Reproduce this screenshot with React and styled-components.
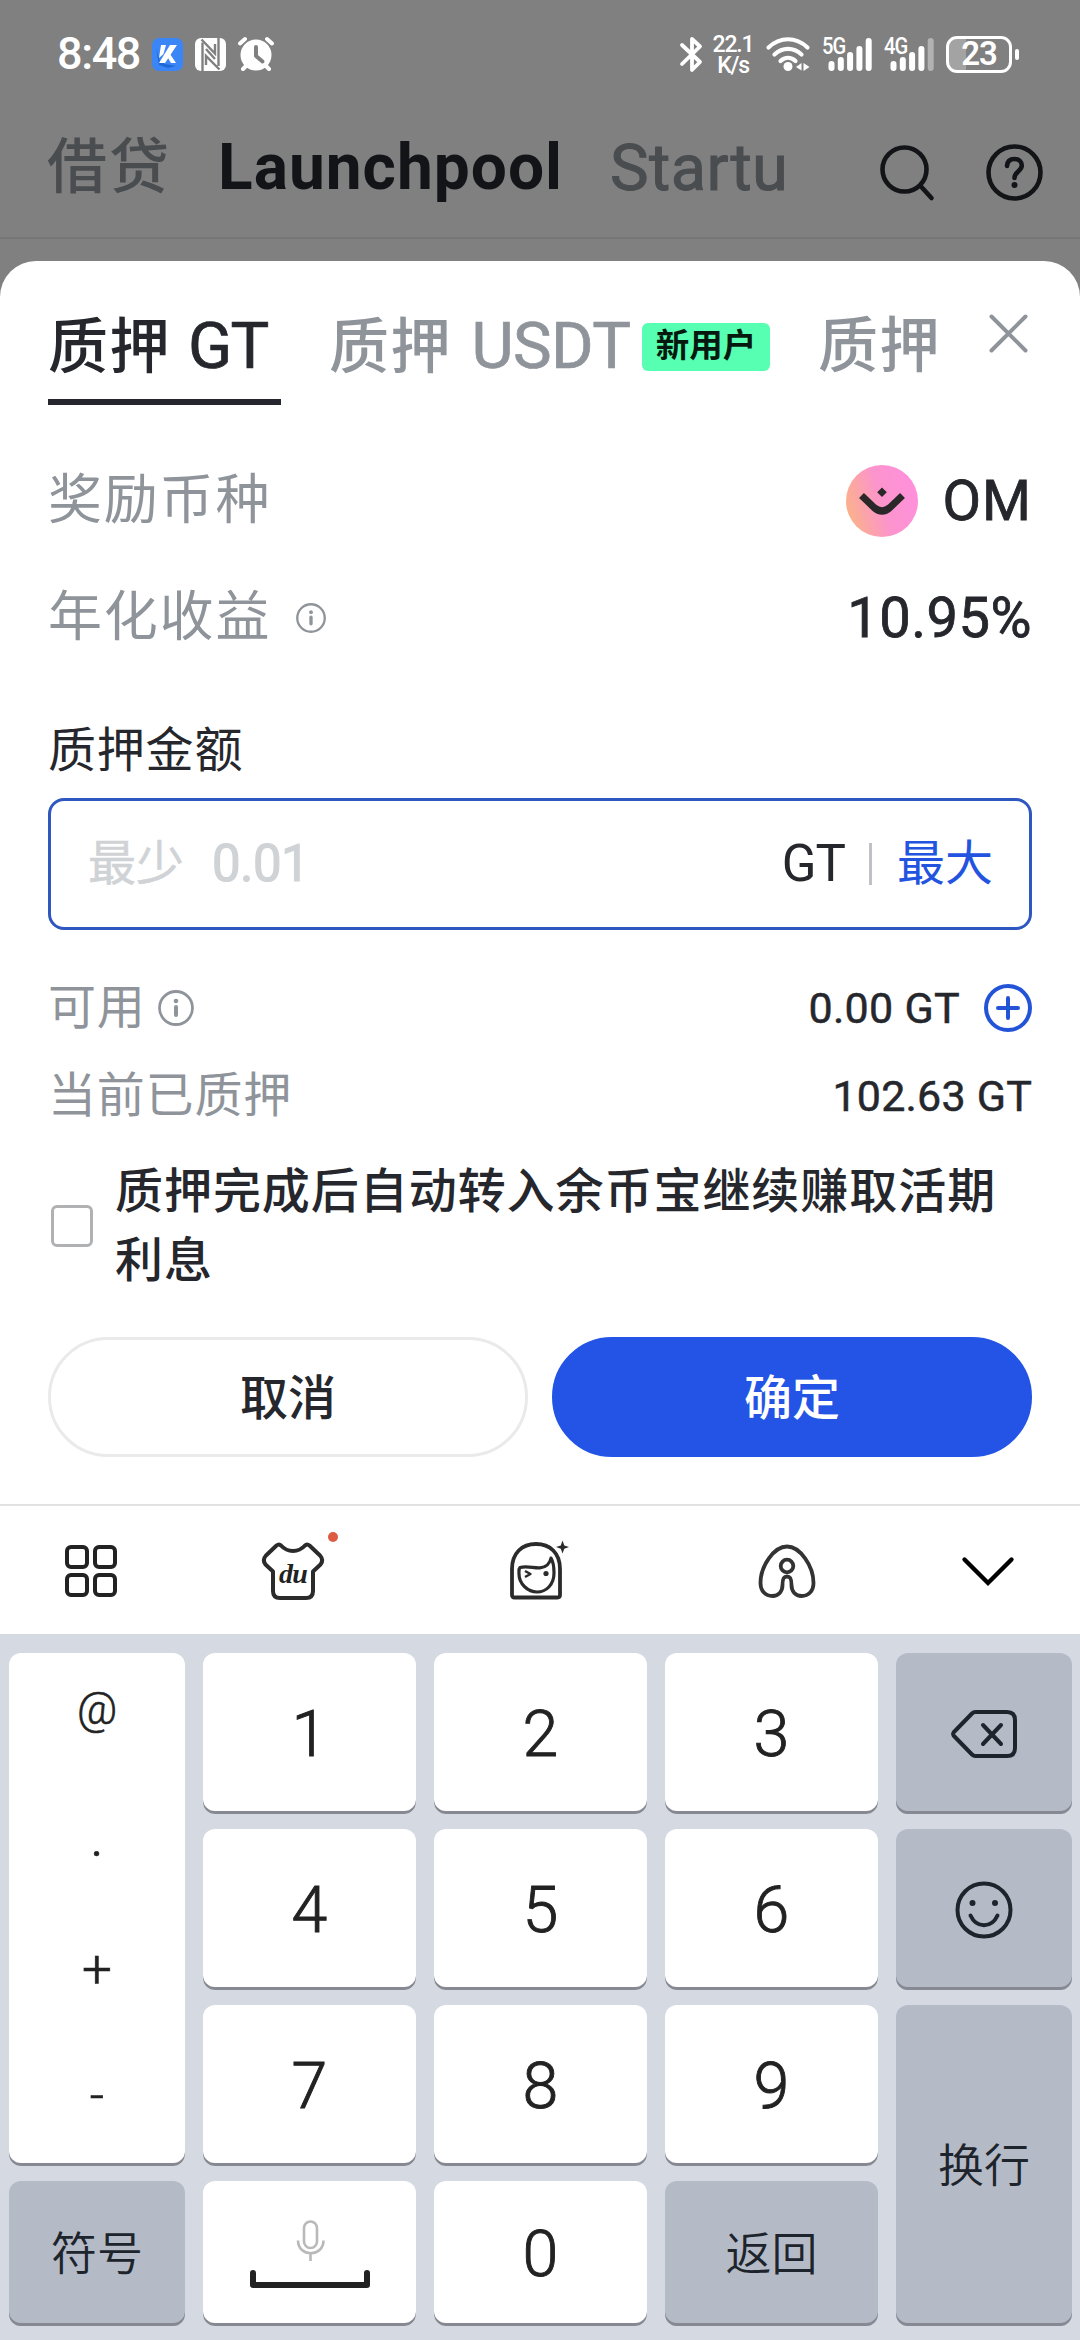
import React from 'react';
import styled, { createGlobalStyle } from 'styled-components';

const GlobalStyle = createGlobalStyle`
  * { box-sizing: border-box; }
  html, body { margin: 0; padding: 0; background: #808080; }
  body {
    font-family: Roboto, "Noto Sans CJK SC", sans-serif;
    color: #25272d;
    width: 1080px;
    overflow-x: hidden;
  }
  svg { display: block; flex: none; overflow: visible; }
  button { font: inherit; color: inherit; border: 0; padding: 0; margin: 0; background: none; }
`;

const Screen = styled.div`
  width: 1080px;
  height: 2340px;
  display: flex;
  flex-direction: column;
  overflow: hidden;
  background: #808080;
`;

/* ---------- status bar ---------- */
const StatusBar = styled.div`
  height: 108px;
  flex: none;
  display: flex;
  justify-content: space-between;
  align-items: center;
  padding: 0 61px 0 57px;
  color: #fff;
`;
const StatusGroup = styled.div`
  display: flex;
  align-items: center;
`;
const Clock = styled.span`
  font-size: 45px;
  line-height: 54px;
  font-weight: 500;
  letter-spacing: -1.4px;
  width: 95px;
`;
const LeftIcons = styled.div`
  display: flex;
  gap: 12px;
  align-items: center;
`;
const NetSpeed = styled.div`
  display: flex;
  flex-direction: column;
  align-items: center;
  font-size: 23px;
  line-height: 21px;
  font-weight: 500;
  letter-spacing: -1.2px;
  width: 42px;
  margin: 1px 12px 0 10px;
`;
const Signal = styled.div`
  display: flex;
  position: relative;
  margin-left: ${(p) => p.$left}px;
`;
const SignalLabel = styled.span`
  position: absolute;
  left: 0;
  top: -1px;
  font-size: 24px;
  line-height: 20px;
  font-weight: 500;
  letter-spacing: -1px;
  transform: scaleX(0.84);
  transform-origin: left;
`;
const Battery = styled.div`
  display: flex;
  align-items: center;
  gap: 3px;
  margin-left: 12px;
`;
const BatteryCell = styled.div`
  width: 66px;
  height: 37px;
  border: 3px solid #fff;
  border-radius: 11px;
  display: flex;
  align-items: center;
  justify-content: center;
  background: #808080 linear-gradient(90deg, #a3a3a3 0%, #a3a3a3 28%, #808080 29%, #808080 100%) no-repeat;
  font-size: 33px;
  line-height: 32px;
  font-weight: 600;
  letter-spacing: -1px;
`;
const BatteryTip = styled.div`
  width: 4px;
  height: 11px;
  border-radius: 2px;
  background: #fff;
`;

/* ---------- dimmed page header ---------- */
const PageHeader = styled.div`
  height: 131px;
  flex: none;
  display: flex;
  align-items: flex-start;
  border-bottom: 2px solid #767676;
  padding: 23px 37px 0 47px;
  line-height: 74px;
`;
const HeaderTab = styled.span`
  font-size: ${(p) => p.$size}px;
  font-weight: ${(p) => p.$weight};
  color: ${(p) => (p.$active ? '#121417' : '#4a4d50')};
  width: ${(p) => p.$w}px;
  white-space: nowrap;
  letter-spacing: ${(p) => p.$ls || 0}px;
  -webkit-text-stroke: ${(p) => p.$stroke || 0}px currentColor;
`;
const HeaderIcons = styled.div`
  margin-left: auto;
  display: flex;
  align-items: center;
  gap: 52px;
  padding-top: 13px;
`;

/* ---------- sheet ---------- */
const Sheet = styled.div`
  margin-top: 22px;
  height: 1243px;
  flex: none;
  background: #fff;
  border-radius: 36px 36px 0 0;
  padding: 0 48px;
  display: flex;
  flex-direction: column;
`;
const TabRow = styled.div`
  height: 144px;
  flex: none;
  display: flex;
  gap: 48px;
`;
const Tab = styled.div`
  display: flex;
  align-items: center;
  width: ${(p) => p.$w}px;
  flex: none;
  height: 144px;
  padding-top: 34px;
  border-bottom: 6px solid ${(p) => (p.$active ? '#25262e' : 'transparent')};
  font-size: 60px;
  line-height: 80px;
  font-weight: 500;
  letter-spacing: 1.5px;
  color: ${(p) => (p.$active ? '#25272d' : '#8f949b')};
  white-space: nowrap;
`;
const Ticker = styled.span`
  font-size: 65px;
  margin-left: ${(p) => p.$left}px;
  letter-spacing: ${(p) => p.$ls}px;
  font-weight: 400;
  -webkit-text-stroke: 0.7px currentColor;
`;
const Badge = styled.span`
  margin-left: auto;
  width: 128px;
  height: 48px;
  border-radius: 6px;
  background: #56ffb2;
  color: #06190f;
  font-size: 33.5px;
  line-height: 45px;
  font-weight: 700;
  letter-spacing: 0;
  text-align: center;
`;
const CloseButton = styled.button`
  margin-left: auto;
  align-self: flex-start;
  padding: 53px 4px 0 0;
`;

const InfoRow = styled.div`
  display: flex;
  justify-content: space-between;
  align-items: center;
  height: ${(p) => p.$h}px;
  margin-top: ${(p) => p.$mt || 0}px;
  flex: none;
`;
const Label = styled.span`
  display: flex;
  align-items: center;
  gap: ${(p) => p.$gap || 0}px;
  font-size: ${(p) => (p.$large ? 54 : 48)}px;
  line-height: 70px;
  letter-spacing: ${(p) => (p.$large ? 1.8 : 0.8)}px;
  font-weight: 400;
  color: #8f949b;
`;
const Value = styled.span`
  display: flex;
  align-items: center;
  gap: ${(p) => p.$gap || 0}px;
  font-size: ${(p) => (p.$large ? 56 : 43)}px;
  line-height: 70px;
  font-weight: 400;
  -webkit-text-stroke: ${(p) => (p.$large ? 0.8 : 0.5)}px currentColor;
  letter-spacing: ${(p) => p.$ls || 0}px;
  color: #25272d;
`;
const FieldTitle = styled.div`
  margin-top: 44px;
  height: 60px;
  flex: none;
  font-size: 48px;
  line-height: 60px;
  letter-spacing: 0.8px;
`;
const AmountField = styled.div`
  margin-top: 17px;
  height: 132px;
  flex: none;
  border: 3px solid #2f57c0;
  border-radius: 16px;
  display: flex;
  align-items: center;
  padding: 0 36px 0 37px;
  font-size: 48px;
  line-height: 70px;
`;
const Placeholder = styled.span`
  color: #d0d3d6;
  display: flex;
  gap: 28px;
  flex: 1;
  -webkit-text-stroke: 0.5px currentColor;
`;
const PlaceholderAmount = styled.span`
  font-size: 51px;
  letter-spacing: -0.6px;
  -webkit-text-stroke: 1.2px currentColor;
`;
const Unit = styled.span`
  font-size: 51px;
  letter-spacing: -1px;
`;
const FieldDivider = styled.span`
  width: 3px;
  height: 42px;
  background: #bfc1c6;
  margin: 0 25px 0 24px;
`;
const MaxButton = styled.button`
  color: #2354e0;
`;
const ConsentRow = styled.label`
  margin-top: 23px;
  height: 138px;
  flex: none;
  display: flex;
  align-items: center;
`;
const Checkbox = styled.span`
  width: 42px;
  height: 42px;
  border: 3px solid #b0b1b3;
  border-radius: 6px;
  margin: 4px 22px 0 3px;
  flex: none;
`;
const ConsentText = styled.span`
  font-size: 48px;
  line-height: 69px;
  font-weight: 500;
  letter-spacing: 0.95px;
  width: 900px;
  padding-top: 3px;
`;
const Actions = styled.div`
  margin-top: 44px;
  display: grid;
  grid-template-columns: 1fr 1fr;
  gap: 24px;
  height: 120px;
  flex: none;
`;
const ActionButton = styled.button`
  border-radius: 60px;
  border: 3px solid ${(p) => (p.$primary ? '#2354e6' : '#eaeaea')};
  background: ${(p) => (p.$primary ? '#2354e6' : '#fff')};
  color: ${(p) => (p.$primary ? '#fff' : '#25272d')};
  font-size: 48px;
  line-height: 70px;
  font-weight: 500;
  padding-top: 3px;
`;

/* ---------- keyboard ---------- */
const KeyboardBar = styled.div`
  height: 130px;
  flex: none;
  background: #fff;
  border-top: 2px solid #e2e2e2;
  display: grid;
  grid-template-columns: 197px 248px 248px 204px auto;
  align-items: start;
  padding: 36px 66px 0 65px;
`;
const ShirtIcon = styled.div`
  position: relative;
`;
const RedDot = styled.span`
  position: absolute;
  left: 66px;
  top: -10px;
  width: 10px;
  height: 10px;
  border-radius: 50%;
  background: #dd5a43;
`;
const Keyboard = styled.div`
  flex: 1;
  background: #d5d9e1;
  padding: 19px 8px 14px 9px;
  display: grid;
  grid-template-columns: 176px 213px 213px 213px 176px;
  grid-template-rows: 161px 161px 161px 145px;
  gap: 15px 18px;
`;
const Key = styled.button`
  display: flex;
  flex-direction: column;
  align-items: center;
  justify-content: center;
  grid-row: ${(p) => p.$row};
  grid-column: ${(p) => p.$col};
  background: ${(p) => (p.$dark ? '#b4bbc7' : '#fff')};
  border-radius: 12px;
  box-shadow: inset 0 -3px 0 #868991;
  color: ${(p) => (p.$dark ? '#1e242c' : '#222')};
  font-size: ${(p) => (p.$dark ? 46 : 64.5)}px;
  line-height: 70px;
  font-weight: ${(p) => (p.$dark ? 350 : 300)};
  -webkit-text-stroke: ${(p) => (p.$dark ? 0 : 0.9)}px currentColor;
`;
const SymbolKey = styled(Key)`
  justify-content: flex-start;
  line-height: 80px;
  padding-top: 16px;
  -webkit-text-stroke: 0.6px currentColor;
`;
const SymbolItem = styled.span`
  height: ${(p) => p.$h}px;
  font-size: ${(p) => p.$size || 44}px;
  font-weight: ${(p) => p.$weight || 300};
`;

const KIcon = () => (
  <svg width="31" height="33" viewBox="0 0 31 33">
    <rect width="31" height="33" rx="7" fill="#3b86f7" />
    <path d="M4 10 L8 23 L13 26 L24 28 L16 30 L7 27 Z" fill="#1f68d8" />
    <path d="M9 7h5l-2.500 9-4.500 4z" fill="#fff" />
    <path d="M18 7h7L13 25H7z" fill="#fff" />
    <path d="M18 16l6 9h-5l-3-5z" fill="#fff" />
  </svg>
);
const NfcIcon = () => (
  <svg width="31" height="33" viewBox="0 0 31 33">
    <rect x="0" y="0" width="31" height="33" rx="6" fill="#fff" />
    <g stroke="#808080" fill="none" strokeWidth="2.400">
      <path d="M7.500 33V4.500" />
      <path d="M6.500 1.500 L20 15.500 V6" />
      <path d="M23.500 0V28" />
      <path d="M24.500 31.500 L11 18 V27" />
      <path d="M11 11 L20 21" />
    </g>
  </svg>
);
const AlarmIcon = () => (
  <svg width="36" height="34" viewBox="0 0 36 34">
    <circle cx="18" cy="18" r="15.500" fill="#fff" />
    <g stroke="#fff" strokeWidth="4" strokeLinecap="round">
      <path d="M2 6.500L7 2M34 6.500L29 2M9 28l-4 4M27 28l4 4" />
    </g>
    <path d="M18 10v9l6.500 5.500" stroke="#808080" strokeWidth="4" fill="none" strokeLinecap="round" strokeLinejoin="round" />
  </svg>
);
const BluetoothIcon = () => (
  <svg width="22" height="35" viewBox="0 0 22 35" fill="none" stroke="#fff" strokeWidth="3.800" strokeLinecap="round" strokeLinejoin="round">
    <path d="M2 8L20 25 12 33V2l8 7.500L2 27" />
  </svg>
);
const WifiIcon = () => (
  <svg width="44" height="34" viewBox="0 0 44 34" fill="none" stroke="#fff" strokeWidth="4.200" strokeLinecap="round">
    <path d="M2.500 10.500C14 -0.500 30 -0.500 41.500 10.500" />
    <path d="M8.500 17.500C16.500 10 27.500 10 35.500 17.500" />
    <path d="M14.500 24C19 19.800 25 19.800 29.500 24" />
    <circle cx="22" cy="29.500" r="4.500" fill="#fff" stroke="none" />
    <path d="M35.500 26v7.500L30 30zM37.500 26v8l6-4z" fill="#fff" stroke="none" />
  </svg>
);
const bars = [10, 14, 19, 25, 33];
const SignalBars = ({ faded }) => (
  <svg width="50" height="34" viewBox="0 0 50 34">
    {bars.map((h, i) => (
      <rect key={h} x={6.5 + i * 9.3} y={34 - h} width="6" height={h} rx="3" fill={faded && i === 4 ? '#b2b2b2' : '#fff'} />
    ))}
  </svg>
);
const SearchIcon = () => (
  <svg width="54" height="56" viewBox="0 0 54 56" fill="none" stroke="#121417" strokeWidth="4.600" strokeLinecap="round">
    <circle cx="24.500" cy="24.500" r="22" />
    <path d="M41 41.500l10.500 11.500" />
  </svg>
);
const HelpIcon = () => (
  <svg width="57" height="57" viewBox="0 0 57 57" fill="none" stroke="#121417" strokeWidth="4.600" strokeLinecap="round">
    <circle cx="28.500" cy="28.500" r="26" />
    <path d="M21 22c.3-5 3.500-7 7.500-7 4.500 0 7.300 2.800 7.300 6.500 0 5.500-7.300 6-7.300 12.500" />
    <circle cx="28.500" cy="41" r="3" fill="#121417" stroke="none" />
  </svg>
);
const CloseIcon = () => (
  <svg width="39" height="39" viewBox="0 0 39 39" fill="none" stroke="#8f949b" strokeWidth="4" strokeLinecap="round">
    <path d="M2.500 2.500l34 34M36.500 2.500l-34 34" />
  </svg>
);
const InfoIcon = ({ size }) => (
  <svg width={size} height={size} viewBox="0 0 36 36" fill="none" stroke="#8f949b" strokeWidth="2.800">
    <circle cx="18" cy="18" r="16.500" />
    <path d="M18 17v8" strokeWidth="4" strokeLinecap="round" />
    <circle cx="18" cy="11" r="2.300" fill="#8f949b" stroke="none" />
  </svg>
);
const OmCoin = () => (
  <svg width="72" height="72" viewBox="0 0 72 72">
    <defs>
      <linearGradient id="om" x1="0" y1="0.650" x2="1" y2="0.350">
        <stop offset="0" stopColor="#fbb288" />
        <stop offset="0.500" stopColor="#fc94cd" />
        <stop offset="1" stopColor="#ff90dc" />
      </linearGradient>
    </defs>
    <circle cx="36" cy="36" r="36" fill="url(#om)" />
    <path d="M15.500 30.500L28 42.500q8 7 16 0L56.500 30.500" fill="none" stroke="#2a2728" strokeWidth="7" />
    <path d="M36 22.500l4.800 4.700-4.800 4.700-4.800-4.700z" fill="#2a2728" />
  </svg>
);
const PlusIcon = () => (
  <svg width="48" height="48" viewBox="0 0 48 48" fill="none" stroke="#2354d8" strokeWidth="4" strokeLinecap="round">
    <circle cx="24" cy="24" r="22" />
    <path d="M24 14v20M14 24h20" />
  </svg>
);
const GridIcon = () => (
  <svg width="52" height="52" viewBox="0 0 52 52" fill="none" stroke="#222" strokeWidth="4">
    <rect x="2" y="5" width="20" height="20" rx="4" />
    <rect x="30" y="5" width="20" height="20" rx="4" />
    <rect x="2" y="33" width="20" height="20" rx="4" />
    <rect x="30" y="33" width="20" height="20" rx="4" />
  </svg>
);
const TShirt = () => (
  <svg width="62" height="58" viewBox="0 0 62 58" fill="none" stroke="#2b2b2b" strokeWidth="4" strokeLinejoin="round">
    <path d="M19 3.500q-2-2-4.500 0L4 13.500q-4 4.500-.5 9l7.500 7V49q0 7 7 7h26q7 0 7-7V29.500l7.500-7q3.500-4.500-.5-9L47.500 3.500q-2.500-2-4.500 0-5 5.500-12 5.500T19 3.500z" />
    <text x="31" y="41" textAnchor="middle" fontFamily="Liberation Serif, serif" fontStyle="italic" fontWeight="700" fontSize="28" letterSpacing="-0.800" fill="#222" stroke="none">du</text>
  </svg>
);
const GirlIcon = () => (
  <svg width="59" height="58" viewBox="0 0 59 58" fill="none" stroke="#2b2b2b" strokeWidth="3.800" strokeLinejoin="round">
    <path d="M2 53V27C2 11 12 2 26 2s24 9 24 25v26q0 2.500-2.500 2.500h-43Q2 55.500 2 53z" />
    <path d="M10 25.500c7-2 14 .8 20 .3 6-.5 10-4.500 11-9.800 3 5 3 10 3 15 0 12-8 19-17 19S9 42 9 32c0-3-.5-5 1-6.500z" strokeWidth="3.200" />
    <path d="M15 29l5.500 3-5.500 3" strokeWidth="2.400" />
    <circle cx="36" cy="31.500" r="2.600" fill="#2b2b2b" stroke="none" />
    <path d="M52.500 -1.500l1.800 4.900L59 5l-4.700 1.800L52.500 11.500l-1.700-4.700L46 5l4.800-1.600z" fill="#2b2b2b" stroke="none" />
  </svg>
);
const AvatarIcon = () => (
  <svg width="58" height="56" viewBox="0 0 58 56" fill="none" stroke="#333" strokeWidth="3.800" strokeLinejoin="round">
    <path d="M29 4.500C42 4.500 55.500 24 55.500 41c0 8-5 13-12 13-6 0-10-4.500-10-11 0-5-.5-8.500-4.500-8.500s-4.500 3.500-4.500 8.500c0 6.500-4 11-10 11-7 0-12-5-12-13C2.500 24 16 4.500 29 4.500z" />
    <circle cx="29" cy="24" r="6.300" />
  </svg>
);
const ChevronIcon = () => (
  <svg width="52" height="46" viewBox="0 0 52 46" fill="none" stroke="#000" strokeWidth="4.400" strokeLinecap="round">
    <path d="M2.500 17.500L26 41 49.500 17.500" />
  </svg>
);
const BackspaceIcon = () => (
  <svg width="66" height="48" viewBox="0 0 66 48" fill="none" stroke="#1e242c" strokeWidth="4" strokeLinecap="round" strokeLinejoin="round">
    <path d="M24.500 2H56q8 0 8 8v28q0 8-8 8H24.500q-2 0-3.500-1.500L2.500 25.500q-1-1.500 0-3L21 3.500Q22.500 2 24.500 2z" />
    <path d="M32 15l18 19M50 15L32 34" />
  </svg>
);
const SmileIcon = () => (
  <svg width="58" height="58" viewBox="0 0 58 58" fill="none" stroke="#1e242c" strokeWidth="4" strokeLinecap="round">
    <circle cx="29" cy="29" r="26.500" />
    <path d="M15.500 34.500c6 13 21 13 27 0" />
    <circle cx="17.500" cy="22" r="3" fill="#1e242c" stroke="none" />
    <circle cx="40" cy="22" r="3" fill="#1e242c" stroke="none" />
  </svg>
);
const SpaceIcon = () => (
  <svg width="120" height="68" viewBox="0 0 120 68" fill="none">
    <g stroke="#b9b9b9" strokeWidth="2.600">
      <rect x="54" y="1.500" width="13" height="26.500" rx="6.500" />
      <path d="M48 20.500c0 17 25.500 17 25.500 0M60.500 33v8" />
    </g>
    <path d="M3 53v12h114V53" stroke="#222" strokeWidth="6" strokeLinecap="round" strokeLinejoin="round" />
  </svg>
);

export default function App() {
  return (
    <Screen>
      <GlobalStyle />
      <StatusBar>
        <StatusGroup>
          <Clock>8:48</Clock>
          <LeftIcons>
            <KIcon />
            <NfcIcon />
            <AlarmIcon />
          </LeftIcons>
        </StatusGroup>
        <StatusGroup>
          <BluetoothIcon />
          <NetSpeed>
            <span>22.1</span>
            <span>K/s</span>
          </NetSpeed>
          <WifiIcon />
          <Signal $left={12}>
            <SignalLabel>5G</SignalLabel>
            <SignalBars />
          </Signal>
          <Signal $left={12}>
            <SignalLabel>4G</SignalLabel>
            <SignalBars faded />
          </Signal>
          <Battery>
            <BatteryCell>23</BatteryCell>
            <BatteryTip />
          </Battery>
        </StatusGroup>
      </StatusBar>

      <PageHeader>
        <HeaderTab $size={60} $w={171} $ls={2} $weight={500}>借贷</HeaderTab>
        <HeaderTab $size={64} $w={392} $ls={1} $weight={700} $active>Launchpool</HeaderTab>
        <HeaderTab $size={65} $w={190} $ls={0.4} $weight={400} $stroke={1}>Startu</HeaderTab>
        <HeaderIcons>
          <SearchIcon />
          <HelpIcon />
        </HeaderIcons>
      </PageHeader>

      <Sheet>
        <TabRow>
          <Tab $w={233} $active>
            <span>质押<Ticker $left={3} $ls={-2}> GT</Ticker></span>
          </Tab>
          <Tab $w={441}>
            <span>质押<Ticker $left={4} $ls={-0.6}> USDT</Ticker></span>
            <Badge>新用户</Badge>
          </Tab>
          <Tab $w={120}>质押</Tab>
          <CloseButton aria-label="close"><CloseIcon /></CloseButton>
        </TabRow>

        <InfoRow $h={116} $mt={38}>
          <Label $large>奖励币种</Label>
          <Value $large $gap={25} $ls={1}><OmCoin />OM</Value>
        </InfoRow>
        <InfoRow $h={118}>
          <Label $large $gap={25}>年化收益<InfoIcon size={30} /></Label>
          <Value $large $ls={0.5}>10.95%</Value>
        </InfoRow>

        <FieldTitle>质押金额</FieldTitle>
        <AmountField>
          <Placeholder>
            <span>最少</span>
            <PlaceholderAmount>0.01</PlaceholderAmount>
          </Placeholder>
          <Unit>GT</Unit>
          <FieldDivider />
          <MaxButton>最大</MaxButton>
        </AmountField>

        <InfoRow $h={72} $mt={42}>
          <Label $gap={12}>可用<InfoIcon size={36} /></Label>
          <Value $gap={24} $ls={0.3}>0.00 GT<PlusIcon /></Value>
        </InfoRow>
        <InfoRow $h={72} $mt={16}>
          <Label>当前已质押</Label>
          <Value $ls={0.2}>102.63 GT</Value>
        </InfoRow>

        <ConsentRow>
          <Checkbox />
          <ConsentText>质押完成后自动转入余币宝继续赚取活期利息</ConsentText>
        </ConsentRow>

        <Actions>
          <ActionButton>取消</ActionButton>
          <ActionButton $primary>确定</ActionButton>
        </Actions>
      </Sheet>

      <KeyboardBar>
        <GridIcon />
        <ShirtIcon>
          <TShirt />
          <RedDot />
        </ShirtIcon>
        <GirlIcon />
        <AvatarIcon />
        <ChevronIcon />
      </KeyboardBar>
      <Keyboard>
        <SymbolKey $row="1 / 4" $col="1">
          <SymbolItem $h={127}>@</SymbolItem>
          <SymbolItem $h={134} $size={58} $weight={300}>.</SymbolItem>
          <SymbolItem $h={125} $size={53}>+</SymbolItem>
          <SymbolItem $h={80} $size={50} $weight={300}>-</SymbolItem>
        </SymbolKey>
        <Key $row="1" $col="2">1</Key>
        <Key $row="1" $col="3">2</Key>
        <Key $row="1" $col="4">3</Key>
        <Key $row="1" $col="5" $dark aria-label="backspace"><BackspaceIcon /></Key>
        <Key $row="2" $col="2">4</Key>
        <Key $row="2" $col="3">5</Key>
        <Key $row="2" $col="4">6</Key>
        <Key $row="2" $col="5" $dark aria-label="emoji"><SmileIcon /></Key>
        <Key $row="3" $col="2">7</Key>
        <Key $row="3" $col="3">8</Key>
        <Key $row="3" $col="4">9</Key>
        <Key $row="3 / 5" $col="5" $dark>换行</Key>
        <Key $row="4" $col="1" $dark>符号</Key>
        <Key $row="4" $col="2" aria-label="space"><SpaceIcon /></Key>
        <Key $row="4" $col="3">0</Key>
        <Key $row="4" $col="4" $dark>返回</Key>
      </Keyboard>
    </Screen>
  );
}
